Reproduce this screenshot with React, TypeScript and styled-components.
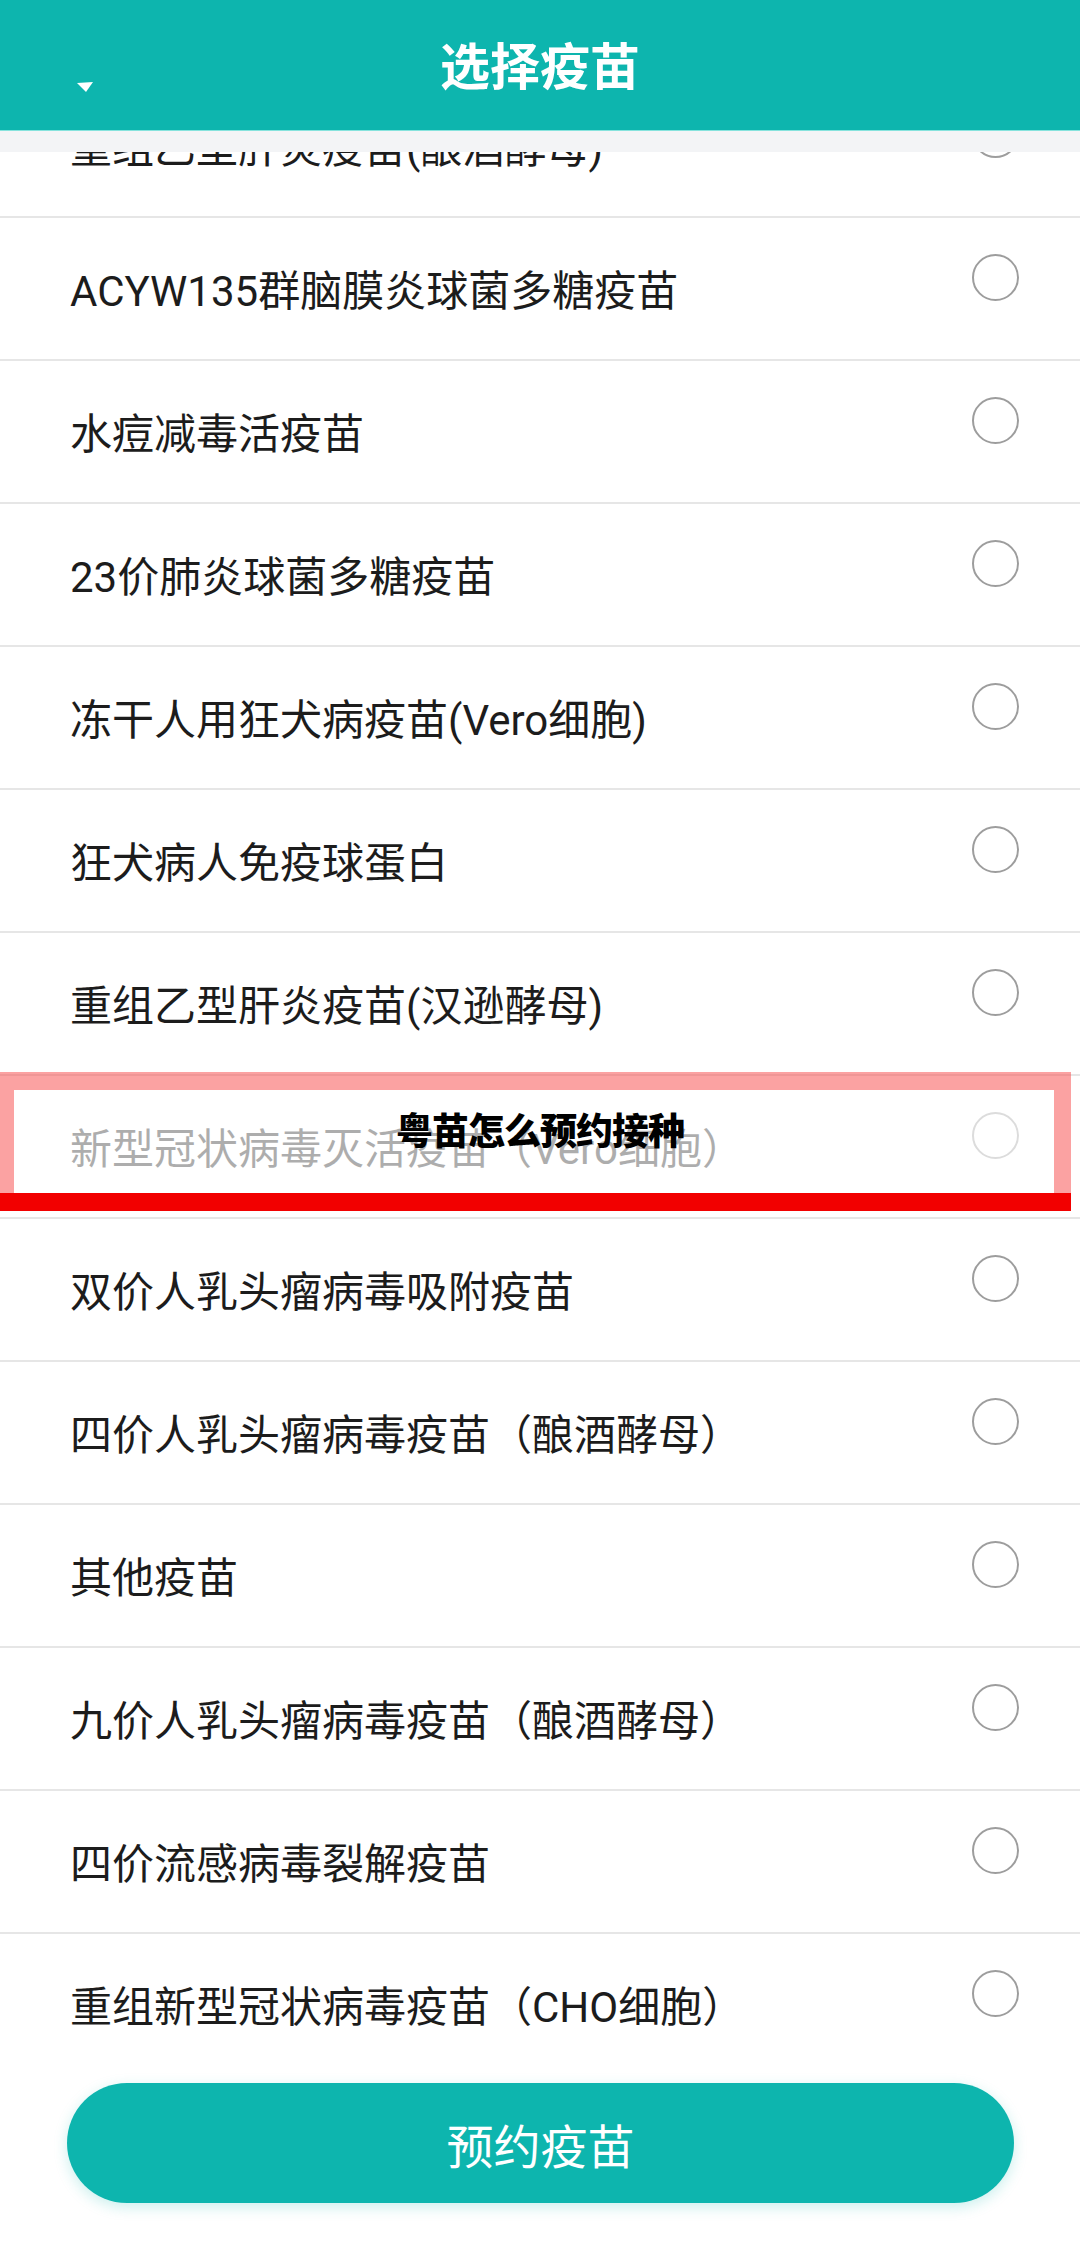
import React from "react";
import styled, { createGlobalStyle } from "styled-components";

const GlobalStyle = createGlobalStyle`
  html, body {
    margin: 0;
    padding: 0;
    background: #fff;
  }
  body {
    font-family: Roboto, "Noto Sans CJK SC", sans-serif;
    color: #1c1c1c;
  }
`;

const Page = styled.div`
  width: 1080px;
  min-height: 2265px;
  background: #fff;
  display: flex;
  flex-direction: column;
`;

const Header = styled.header`
  display: flex;
  flex-direction: column;
`;

const TitleBar = styled.div`
  height: 130px;
  background: #0db5ae;
  border-bottom: 1px solid #86e3dd;
  display: grid;
  grid-template-columns: 1fr auto 1fr;
  align-items: center;
`;

const BackSlot = styled.div`
  align-self: start;
  padding: 82px 0 0 77px;
  display: flex;
`;

const Title = styled.h1`
  margin: 0;
  font-family: "Noto Sans CJK SC", sans-serif;
  font-size: 50px;
  font-weight: 700;
  color: #fff;
  line-height: 1;
  padding-bottom: 4px;
`;

const Strip = styled.div`
  height: 21px;
  background: #f3f4f6;
`;

const List = styled.ul`
  list-style: none;
  margin: 0;
  padding: 0;
`;

const Row = styled.li<{ $clipped?: boolean; $last?: boolean }>`
  position: relative;
  height: ${(p) => (p.$clipped ? "64px" : "141px")};
  border-bottom: ${(p) => (p.$last ? "none" : "2px solid #e6e6e6")};
  overflow: ${(p) => (p.$clipped ? "hidden" : "visible")};
  display: flex;
  flex-direction: column;
  justify-content: flex-end;
`;

const RowBody = styled.div`
  flex: 0 0 141px;
  height: 141px;
  display: flex;
  align-items: center;
  justify-content: space-between;
  padding: 0 61px 0 70px;
`;

const Label = styled.span`
  font-size: 42px;
  line-height: 1;
  color: #1c1c1c;
  padding-top: 6px;
`;

const Radio = styled.span`
  width: 43px;
  height: 43px;
  border: 2px solid #9d9d9d;
  border-radius: 50%;
  margin-top: -22px;
`;

const Banner = styled.div`
  position: absolute;
  left: 0;
  top: -4px;
  width: 1071px;
  height: 139px;
  display: flex;
  flex-direction: column;
`;

const BannerBox = styled.div`
  flex: 1;
  border-style: solid;
  border-color: rgba(248, 70, 70, 0.5);
  border-width: 18px 17px 0 14px;
  background: rgba(255, 255, 255, 0.64);
  background-clip: padding-box;
  display: flex;
  align-items: center;
  justify-content: center;
  padding-bottom: 24px;
`;

const BannerText = styled.span`
  font-family: "Noto Sans CJK SC", sans-serif;
  font-size: 37px;
  font-weight: 900;
  color: #000;
  line-height: 1;
  letter-spacing: -1px;
  margin-left: 12px;
`;

const BannerBar = styled.div`
  height: 18px;
  background: #f20000;
`;

const Footer = styled.div`
  padding: 8px 66px 60px 67px;
`;

const Button = styled.button`
  width: 100%;
  height: 120px;
  border: none;
  border-radius: 60px;
  background: #0db5ae;
  box-shadow: 0 4px 14px rgba(13, 181, 174, 0.22);
  color: #fff;
  font-family: "Noto Sans CJK SC", sans-serif;
  font-size: 47px;
  font-weight: 400;
  line-height: 1;
  cursor: pointer;
`;

const DownCaret = () => (
  <svg width="16" height="11" viewBox="0 0 16 11">
    <polygon points="0,1 16,0 9,10" fill="#fff" />
  </svg>
);

const vaccines = [
  "ACYW135群脑膜炎球菌多糖疫苗",
  "水痘减毒活疫苗",
  "23价肺炎球菌多糖疫苗",
  "冻干人用狂犬病疫苗(Vero细胞)",
  "狂犬病人免疫球蛋白",
  "重组乙型肝炎疫苗(汉逊酵母)",
  "新型冠状病毒灭活疫苗（Vero细胞）",
  "双价人乳头瘤病毒吸附疫苗",
  "四价人乳头瘤病毒疫苗（酿酒酵母）",
  "其他疫苗",
  "九价人乳头瘤病毒疫苗（酿酒酵母）",
  "四价流感病毒裂解疫苗",
  "重组新型冠状病毒疫苗（CHO细胞）",
];

export default function App() {
  return (
    <Page>
      <GlobalStyle />
      <Header>
        <TitleBar>
          <BackSlot>
            <DownCaret />
          </BackSlot>
          <Title>选择疫苗</Title>
          <div />
        </TitleBar>
        <Strip />
      </Header>
      <List>
        <Row $clipped>
          <RowBody>
            <Label>重组乙型肝炎疫苗(酿酒酵母)</Label>
            <Radio />
          </RowBody>
        </Row>
        {vaccines.map((name, i) => (
          <Row key={name} $last={i === vaccines.length - 1}>
            <RowBody>
              <Label>{name}</Label>
              <Radio />
            </RowBody>
            {i === 6 && (
              <Banner>
                <BannerBox>
                  <BannerText>粤苗怎么预约接种</BannerText>
                </BannerBox>
                <BannerBar />
              </Banner>
            )}
          </Row>
        ))}
      </List>
      <Footer>
        <Button>预约疫苗</Button>
      </Footer>
    </Page>
  );
}
